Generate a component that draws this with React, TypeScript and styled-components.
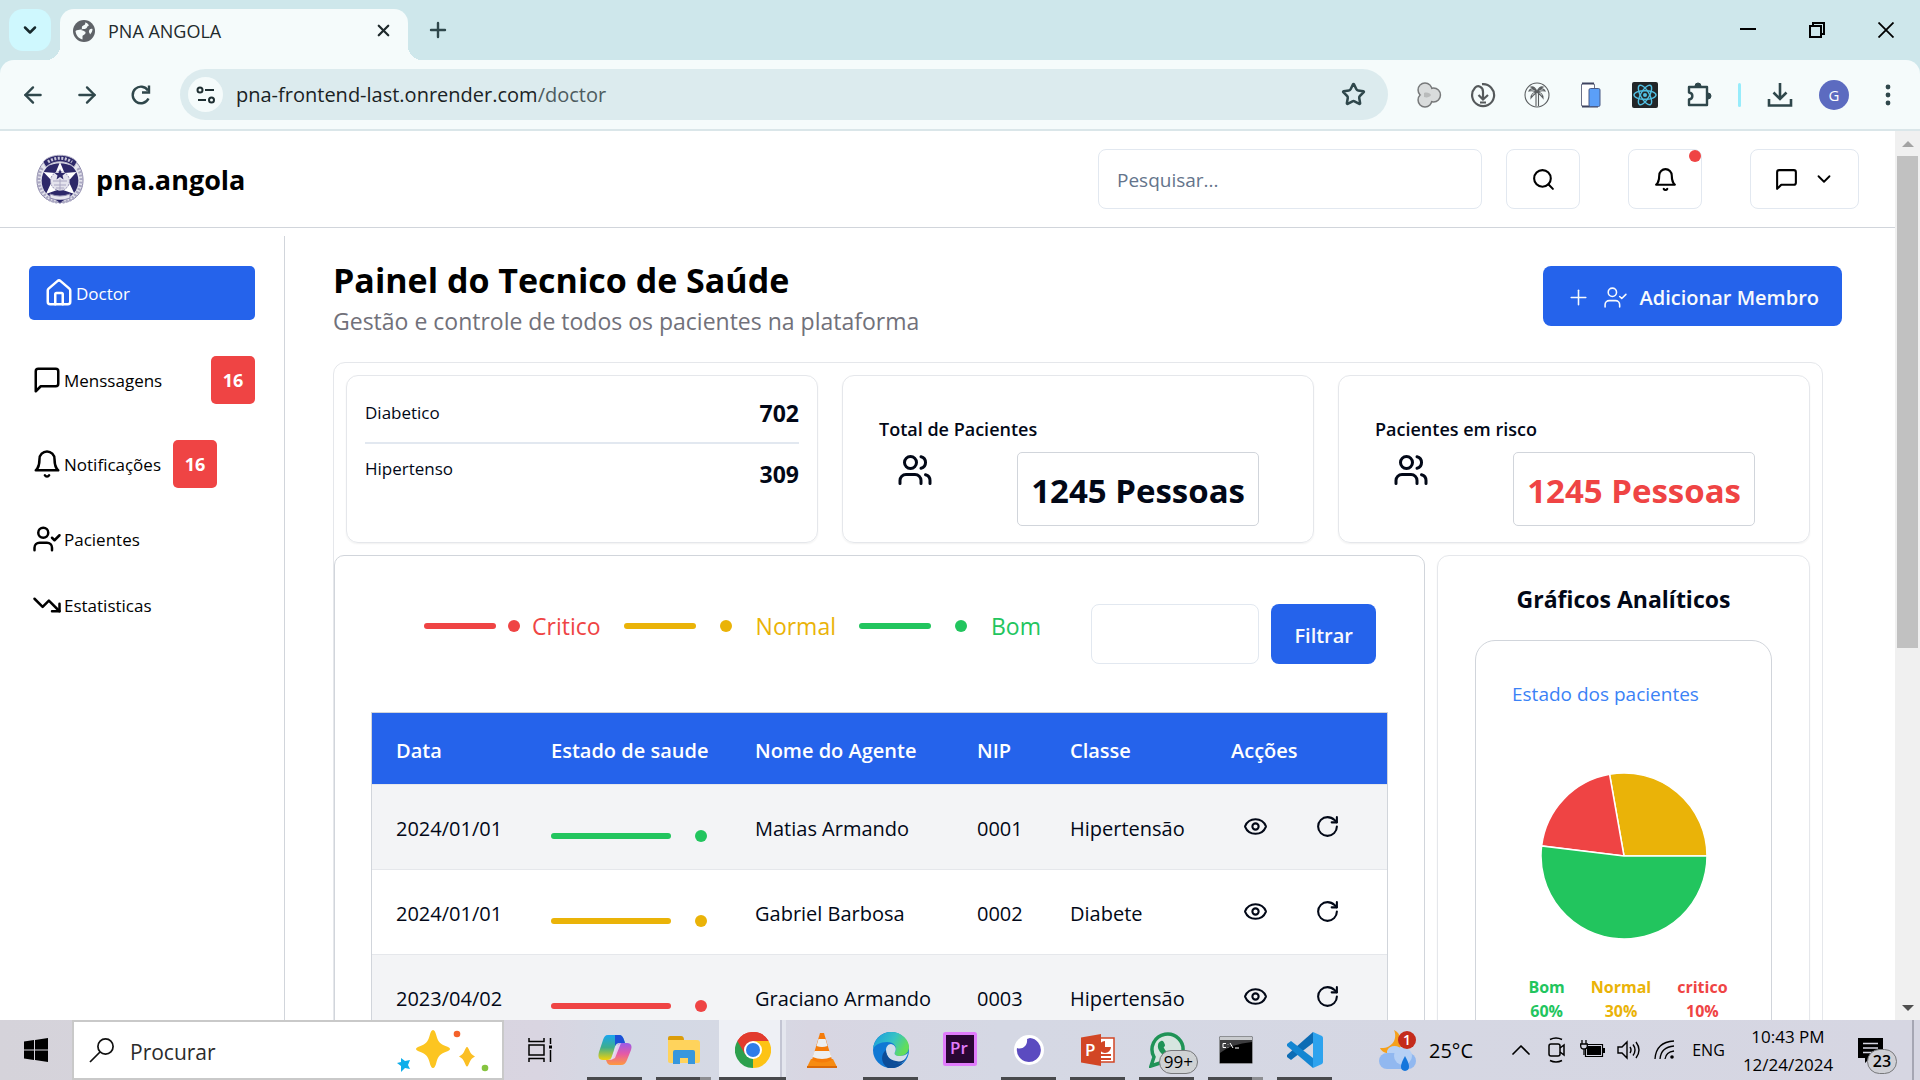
import React from "react";
import styled, { createGlobalStyle, css } from "styled-components";
import {
  ArrowLeft,
  ArrowRight,
  ChevronDown,
  ChevronUp,
  Eye,
  House,
  Plus,
  RotateCw,
  Search,
  Star,
  TrendingDown,
  X,
} from "lucide-react";

const sans = `"Open Sans", "Noto Sans", sans-serif`;

const color = {
  blue: "#2563eb",
  red: "#ef4444",
  yellow: "#eab308",
  green: "#22c55e",
  line: "#d1d5db",
  soft: "#e5e7eb",
  field: "#e2e8f0",
  ink: "#020817",
  chromeInk: "#2f474b",
};

const GlobalStyle = createGlobalStyle`
  *, *::before, *::after { box-sizing: border-box; }
  body { margin: 0; background: #fff; color: #000; font-family: ${sans}; }
  button, input { font: inherit; color: inherit; }
  button { padding: 0; border: 0; background: none; cursor: pointer; }
  a { color: inherit; text-decoration: none; }
  h1, h2, h3, p, ul, dl, dd { margin: 0; padding: 0; }
  ul { list-style: none; }
  svg { display: block; flex: none; }
`;

const Desktop = styled.div`
  display: flex;
  flex-direction: column;
  height: 100vh;
  overflow: hidden;
`;

/* ---------- Browser ---------- */

const TabStrip = styled.div`
  display: flex;
  align-items: stretch;
  height: 60px;
  padding: 9px 0 0 9px;
  background: #cee7eb;
`;

const TabMenuButton = styled.button`
  display: grid;
  place-items: center;
  width: 42px;
  height: 42px;
  border-radius: 14px;
  background: #cff8fe;
  color: #17282b;
`;

const Tab = styled.div`
  position: relative;
  display: flex;
  align-items: center;
  gap: 13px;
  width: 348px;
  margin-left: 9px;
  padding: 0 15px 8px 13px;
  border-radius: 14px 14px 0 0;
  background: #f5fbfb;
  font-size: 18px;
  color: #1f2a2c;

  &::before,
  &::after {
    content: "";
    position: absolute;
    bottom: 0;
    width: 14px;
    height: 14px;
  }
  &::before {
    right: 100%;
    background: radial-gradient(circle at 0 0, transparent 14px, #f5fbfb 14px);
  }
  &::after {
    left: 100%;
    background: radial-gradient(circle at 100% 0, transparent 14px, #f5fbfb 14px);
  }
`;

const TabTitle = styled.span`
  flex: 1;
`;

const StripButton = styled.button`
  display: grid;
  place-items: center;
  width: 60px;
  height: 42px;
  color: ${color.chromeInk};
`;

const WindowButtons = styled.div`
  display: flex;
  margin-left: auto;
`;

const WindowButton = styled.button`
  display: grid;
  place-items: center;
  width: 69px;
  height: 42px;
  color: #000;
`;

const ToolbarBack = styled.div`
  background: #cee7eb;
`;

const Toolbar = styled.div`
  display: flex;
  align-items: center;
  height: 71px;
  padding: 0 5px 0 6px;
  border-bottom: 2px solid #dae6e9;
  border-radius: 14px 14px 0 0;
  background: #f5fbfb;
  color: ${color.chromeInk};
`;

const NavButton = styled.button`
  display: grid;
  place-items: center;
  width: 54px;
  height: 44px;
`;

const Omnibox = styled.div`
  display: flex;
  align-items: center;
  flex: 1;
  gap: 13px;
  height: 51px;
  margin: 0 14px 0 12px;
  padding: 0 22px 0 8px;
  border-radius: 26px;
  background: #dcebee;
`;

const SiteInfo = styled.button`
  display: grid;
  place-items: center;
  width: 35px;
  height: 35px;
  border-radius: 50%;
  background: #f5fbfb;
`;

const Address = styled.a`
  flex: 1;
  font-size: 20px;
  color: #1a2224;

  span {
    color: #4d5c60;
  }
`;

const ExtensionButton = styled.button`
  display: grid;
  place-items: center;
  width: 54px;
  height: 44px;
`;

const ToolbarDivider = styled.span`
  width: 3px;
  height: 24px;
  margin: 0 12px;
  border-radius: 2px;
  background: #97ecfb;
`;

const Avatar = styled.span`
  display: grid;
  place-items: center;
  width: 30px;
  height: 30px;
  border-radius: 50%;
  background: #5c6bc0;
  color: #fff;
  font-size: 15px;
`;

/* ---------- Page ---------- */

const Viewport = styled.div`
  display: flex;
  flex: 1;
  min-height: 0;
`;

const Page = styled.div`
  flex: 1;
  min-width: 0;
  overflow: hidden;
`;

const Scrollbar = styled.div`
  display: flex;
  flex-direction: column;
  align-items: center;
  justify-content: space-between;
  width: 25px;
  padding: 10px 0 9px;
  background: #f0f0f0;
`;

const ScrollThumb = styled.span`
  width: 21px;
  height: 492px;
  margin: 9px 0 auto;
  background: #c1c1c1;
`;

const ScrollArrow = styled.span<{ $down?: boolean }>`
  border: 6px solid transparent;
  ${(p) =>
    p.$down
      ? css`
          border-top-color: #505050;
          border-bottom: 0;
        `
      : css`
          border-bottom-color: #a3a3a3;
          border-top: 0;
        `}
`;

const SiteHeader = styled.header`
  display: flex;
  align-items: center;
  height: 97px;
  padding: 0 36px;
  border-bottom: 1px solid ${color.line};
`;

const Brand = styled.a`
  display: flex;
  align-items: center;
  gap: 12px;
  font-size: 27px;
  font-weight: 700;
`;

const HeaderTools = styled.div`
  display: flex;
  align-items: center;
  gap: 48px;
  margin-left: auto;
`;

const SearchForm = styled.form`
  display: flex;
  gap: 24px;
`;

const fieldBox = css`
  height: 60px;
  border: 1px solid ${color.field};
  border-radius: 8px;
  background: #fff;
`;

const Field = styled.input<{ $width: number }>`
  ${fieldBox}
  width: ${(p) => p.$width}px;
  padding: 1px 18px 0;
  font-size: 19px;
  outline: 0;

  &::placeholder {
    color: #64748b;
    opacity: 1;
  }
`;

const OutlineButton = styled.button`
  ${fieldBox}
  position: relative;
  display: flex;
  align-items: center;
  justify-content: center;
  gap: 14px;
  min-width: 74px;
  padding: 0 23px;
`;

const AlertDot = styled.span`
  position: absolute;
  top: 0;
  right: 0;
  width: 12px;
  height: 12px;
  border-radius: 50%;
  background: ${color.red};
`;

const Body = styled.div`
  display: flex;
  padding-top: 8px;
`;

const Sidebar = styled.nav`
  width: 285px;
  height: 1200px;
  padding: 30px 29px;
  border-right: 1px solid ${color.line};
`;

const MenuLink = styled.a<{ $active?: boolean; $spread?: boolean; $tall?: boolean }>`
  display: flex;
  align-items: center;
  gap: 2px;
  height: ${(p) => (p.$active ? 54 : p.$tall ? 48 : 30)}px;
  margin-bottom: 36px;
  padding-left: 3px;
  font-size: 17px;

  ${(p) =>
    p.$active &&
    css`
      padding-left: 15px;
      border-radius: 5px;
      background: ${color.blue};
      color: #fff;
    `}
  ${(p) => p.$spread && "justify-content: space-between;"}
`;

const MenuLabel = styled.span`
  display: flex;
  align-items: center;
  gap: 2px;
`;

const Badge = styled.span<{ $gap?: number }>`
  display: grid;
  place-items: center;
  width: 44px;
  height: 48px;
  margin-left: ${(p) => p.$gap ?? 0}px;
  border-radius: 5px;
  background: ${color.red};
  color: #fff;
  font-size: 18px;
  font-weight: 700;
`;

const Main = styled.main`
  flex: 1;
  min-width: 0;
  padding: 30px 53px 0 48px;
`;

const TitleRow = styled.div`
  display: flex;
  justify-content: space-between;
  align-items: flex-start;
  height: 96px;
`;

const Title = styled.h1`
  margin-top: -7px;
  font-size: 34px;
  line-height: 42px;
`;

const Subtitle = styled.p`
  font-size: 23px;
  line-height: 40px;
  color: #71717a;
`;

const PrimaryButton = styled.button`
  display: flex;
  align-items: center;
  gap: 12px;
  height: 60px;
  padding: 2px 23px 0;
  border-radius: 8px;
  background: ${color.blue};
  color: #f8fafc;
  font-size: 20px;
  font-weight: 600;
`;

const Board = styled.section`
  margin-right: 19px;
  border: 1px solid ${color.soft};
  border-radius: 12px;
  color: ${color.ink};
`;

const Stats = styled.div`
  display: grid;
  grid-template-columns: repeat(3, 1fr);
  gap: 24px;
  padding: 12px 12px 0;
`;

const StatCard = styled.article<{ $wide?: boolean }>`
  height: 168px;
  padding: ${(p) => (p.$wide ? "18px" : "36px")};
  border: 1px solid ${color.soft};
  border-radius: 12px;
  box-shadow: 0 1px 2px rgba(0, 0, 0, 0.06);
`;

const Count = styled.div`
  display: flex;
  justify-content: space-between;
  height: 48px;

  & + & {
    padding-top: 11px;
    border-top: 2px solid ${color.field};
    height: 62px;
  }
  dt {
    font-size: 17px;
    line-height: 28px;
  }
  dd {
    font-size: 23px;
    line-height: 38px;
    font-weight: 700;
  }
  &:first-child dt {
    line-height: 38px;
  }
`;

const StatTitle = styled.h2`
  font-size: 18px;
  line-height: 34px;
  font-weight: 600;
`;

const StatFigure = styled.div`
  display: flex;
  justify-content: space-between;
  padding: 6px 18px;
`;

const FigureBox = styled.strong<{ $tone?: string }>`
  display: flex;
  align-items: center;
  height: 74px;
  padding: 2px 13px 0;
  border: 1px solid ${color.line};
  border-radius: 5px;
  color: ${(p) => p.$tone ?? "inherit"};
  font-size: 33px;
  white-space: nowrap;
`;

const Lower = styled.div`
  display: flex;
  gap: 12px;
  padding: 12px 12px 0 0;
`;

const RecordsPanel = styled.section`
  flex: 1;
  min-width: 0;
  padding: 48px 36px 36px;
  border: 1px solid ${color.line};
  border-radius: 10px;
`;

const Filters = styled.form`
  display: flex;
  justify-content: flex-end;
  gap: 12px;
  margin-bottom: 48px;
  padding-right: 12px;
`;

const Legend = styled.ul`
  display: flex;
  flex: 1;
  gap: 23px;
  padding-left: 53px;
`;

const LegendItem = styled.li<{ $tone: string; $gap: number }>`
  display: flex;
  align-items: center;
  gap: ${(p) => p.$gap}px;
  height: 44px;
  color: ${(p) => p.$tone};
  font-size: 23px;
`;

const Bar = styled.span<{ $width: number; $tone: string }>`
  width: ${(p) => p.$width}px;
  height: 6px;
  border-radius: 3px;
  background: ${(p) => p.$tone};
`;

const Dot = styled.span<{ $tone: string }>`
  width: 12px;
  height: 12px;
  border-radius: 50%;
  background: ${(p) => p.$tone};
`;

const Records = styled.table`
  width: 100%;
  border: 1px solid ${color.line};
  border-spacing: 0;
  table-layout: fixed;
  font-size: 20px;

  th,
  td {
    padding: 0 0 0 24px;
    text-align: left;
    white-space: nowrap;
  }
  th {
    height: 71px;
    padding-top: 4px;
    background: ${color.blue};
    color: #fff;
    font-weight: 600;
  }
  td {
    height: 85px;
    padding-top: 2px;
    border-top: 1px solid ${color.soft};
  }
  tbody tr:nth-child(odd) {
    background: #f3f4f6;
  }
`;

const HealthState = styled.div`
  display: flex;
  align-items: center;
  gap: 24px;
  padding-top: 16px;
`;

const Actions = styled.div`
  display: flex;
  gap: 47px;
  padding: 0 0 3px 12px;
`;

const ChartPanel = styled.section`
  width: 373px;
  padding: 24px 37px;
  border: 1px solid ${color.soft};
  border-radius: 12px;
  box-shadow: 0 1px 2px rgba(0, 0, 0, 0.06);
`;

const ChartTitle = styled.h2`
  margin-bottom: 22px;
  font-size: 23px;
  line-height: 38px;
  font-weight: 700;
  text-align: center;
`;

const ChartCard = styled.div`
  height: 480px;
  padding: 36px;
  border: 1px solid ${color.line};
  border-radius: 20px;
`;

const ChartName = styled.h3`
  margin-bottom: 61px;
  color: #3b82f6;
  font-size: 19px;
  line-height: 34px;
  font-weight: 500;
  white-space: nowrap;
`;

const PieHolder = styled.div`
  display: flex;
  justify-content: center;
`;

const Shares = styled.ul`
  display: flex;
  justify-content: center;
  gap: 26px;
  margin-top: 37px;
  padding-left: 9px;
`;

const Share = styled.li<{ $tone: string }>`
  display: grid;
  gap: 4px;
  color: ${(p) => p.$tone};
  font-size: 16px;
  line-height: 20px;
  font-weight: 700;
  text-align: center;
`;

/* ---------- Taskbar ---------- */

const Taskbar = styled.footer`
  display: flex;
  height: 60px;
  background: linear-gradient(90deg, #d5d3da 0, #d9d5e1 540px, #d3d9e5 620px, #d6d9e4 760px, #d8d6e2 810px, #d5d8e4 1000px, #d6d6e2 100%);
  color: #000;
`;

const StartButton = styled.button`
  display: grid;
  place-items: center;
  width: 72px;
`;

const SystemSearch = styled.label`
  display: flex;
  align-items: center;
  gap: 15px;
  width: 432px;
  padding: 0 10px 0 15px;
  border: 2px solid #c9c9c9;
  background: #fff;

  input {
    flex: 1;
    min-width: 0;
    padding: 3px 0 0;
    border: 0;
    outline: 0;
    background: none;
    font-size: 21px;
  }
  input::placeholder {
    color: #2b2b2b;
    opacity: 1;
  }
`;

const TaskViewButton = styled.button`
  display: grid;
  place-items: center;
  width: 72px;
`;

const Apps = styled.div`
  display: flex;
  padding-left: 4px;
`;

const AppButton = styled.button<{ $open?: boolean; $active?: boolean; $stack?: boolean }>`
  position: relative;
  display: grid;
  place-items: center;
  width: 69px;
  ${(p) =>
    p.$active &&
    css`
      background: linear-gradient(90deg, transparent 0 1px, #eef0f5 1px 62px, #c3c5d3 62px 64px, #e4e6ee 64px 68px, transparent 68px);
    `}

  &::after {
    content: "";
    position: absolute;
    left: ${(p) => (p.$active ? 1 : 7)}px;
    right: ${(p) => (p.$active ? 1 : 7)}px;
    bottom: 0;
    height: 3px;
    background: ${(p) =>
      p.$stack ? "linear-gradient(90deg, #48494c 44px, #8d8e92 44px)" : p.$open ? "#48494c" : "transparent"};
  }
`;

const UnreadPill = styled.span`
  position: absolute;
  right: 3px;
  bottom: 6px;
  padding: 0 4px;
  border: 1px solid #77787b;
  border-radius: 13px;
  background: #cfd2d4;
  font-size: 17px;
  line-height: 22px;
`;

const Tray = styled.div`
  display: flex;
  align-items: center;
  margin-left: auto;
  padding-right: 6px;
`;

const Weather = styled.button`
  display: flex;
  align-items: center;
  gap: 12px;
  margin-right: 30px;
  font-size: 20px;
`;

const TrayIcon = styled.button`
  display: grid;
  place-items: center;
  width: 36px;
  height: 60px;
`;

const Language = styled.button`
  width: 51px;
  font-size: 16px;
`;

const Clock = styled.button`
  width: 108px;
  padding-top: 1px;
  font-size: 17px;
  line-height: 28px;
`;

const NoticeButton = styled.button`
  position: relative;
  display: grid;
  place-items: center;
  width: 72px;
  height: 60px;
  padding-right: 14px;
  border-right: 2px solid #a5a6b3;
`;

const NoticeCount = styled.span`
  position: absolute;
  top: 29px;
  left: 25px;
  width: 30px;
  border: 1px solid #77787b;
  border-radius: 13px;
  background: #cfd0d6;
  font-size: 16px;
  line-height: 23px;
  font-weight: 600;
`;

/* ---------- Drawings ---------- */

type LineIconProps = { size?: number; stroke?: number; children: React.ReactNode };

const LineIcon = ({ size = 24, stroke = 2, children }: LineIconProps) => (
  <svg
    width={size}
    height={size}
    viewBox="0 0 24 24"
    fill="none"
    stroke="currentColor"
    strokeWidth={stroke}
    strokeLinecap="round"
    strokeLinejoin="round"
    aria-hidden="true"
  >
    {children}
  </svg>
);

const MessageIcon = ({ size }: { size: number }) => (
  <LineIcon size={size}>
    <path d="M21 15a2 2 0 0 1-2 2H7l-4 4V5a2 2 0 0 1 2-2h14a2 2 0 0 1 2 2z" />
  </LineIcon>
);

const BellIcon = ({ size }: { size: number }) => (
  <LineIcon size={size}>
    <path d="M6 8a6 6 0 0 1 12 0c0 7 3 9 3 9H3s3-2 3-9" />
    <path d="M10.3 21a1.94 1.94 0 0 0 3.4 0" />
  </LineIcon>
);

const UserCheckIcon = ({ size, stroke }: { size: number; stroke?: number }) => (
  <LineIcon size={size} stroke={stroke}>
    <path d="M16 21v-2a4 4 0 0 0-4-4H6a4 4 0 0 0-4 4v2" />
    <circle cx="9" cy="7" r="4" />
    <path d="m16 11 2 2 4-4" />
  </LineIcon>
);

const UsersIcon = ({ size }: { size: number }) => (
  <LineIcon size={size}>
    <path d="M16 21v-2a4 4 0 0 0-4-4H6a4 4 0 0 0-4 4v2" />
    <circle cx="9" cy="7" r="4" />
    <path d="M22 21v-2a4 4 0 0 0-3-3.87" />
    <path d="M16 3.13a4 4 0 0 1 0 7.75" />
  </LineIcon>
);

const GlobeIcon = () => (
  <svg width="22" height="22" viewBox="0 0 22 22" aria-hidden="true">
    <circle cx="11" cy="11" r="11" fill="#5f6368" />
    <path d="M12 2.500c1 2-1 2.500-2.500 3.500s.5 3-1.500 3.500-4 0-5.500 1.500c.5 4 3 7.500 7 8.500v-3c0-1.500 2.500-1.500 3-3.500s-2.500-2-4.500-3c1-1.500 3.500-.5 5-1.500s1-2.500 3-3c-1-2-2.500-3-4-3z" fill="#f5fbfb" />
    <path d="M19.500 9c-2-.5-3 .5-3.500 2s1 2 1 3.500c1.500-1.500 2.500-3.500 2.500-5.500z" fill="#f5fbfb" />
  </svg>
);

const PoliceBadge = () => (
  <svg width="48" height="50" viewBox="0 0 48 50" aria-hidden="true">
    <path d="M8 8C14 0 34 0 40 8c9 9 9 25 2 33-8 10-28 10-36 0C-1 33-1 17 8 8z" fill="#e5e5ed" stroke="#8985a8" strokeWidth="1" />
    <path d="M6 14c-5 8-4 18 1 25 4 6 9 9 17 9s13-3 17-9c5-7 6-17 1-25" fill="none" stroke="#aaa7c2" strokeWidth="3.500" strokeDasharray="2 1.500" />
    <path d="M11 13c7-5 19-5 26 0 7 8 7 19 1 26-7 8-21 8-28 0-6-7-6-18 1-26z" fill="#2d2869" />
    <path d="M24 8l4.500 11 12-1-8 9 6 13-14.500-5L10 40l6-13-8.500-9 12 1z" fill="#fff" />
    <circle cx="24" cy="27" r="9.500" fill="#e4e3ed" stroke="#8f8baf" strokeWidth="1" strokeDasharray="2 1" />
    <path d="M24 15l1.500 4h4l-3 2.500 1 4-3.500-2.500-3.500 2.500 1-4-3-2.500h4z" fill="#2d2869" />
    <path d="M17 27h14M18 31h12M20 34h8M24 25v12" stroke="#aaa7c2" strokeWidth="1" />
    <path d="M7 8C14-1 34-1 41 8l-3 5C30 6 18 6 10 13z" fill="#2d2869" stroke="#b9b7cc" strokeWidth="1" />
    <path d="M12 8c7-5 17-5 24 0" fill="none" stroke="#c9c7da" strokeWidth="3" strokeDasharray="2 1.500" />
    <path d="M14 40q10 4 20 0v4q-10 4-20 0z" fill="#e9e8f1" stroke="#8f8baf" strokeWidth="1" />
    <path d="M20 46h8l-4 3z" fill="#2d2869" />
  </svg>
);

const TuneIcon = () => (
  <svg width="20" height="18" viewBox="0 0 20 18" fill="none" stroke="#1f2f32" strokeWidth="2" aria-hidden="true">
    <circle cx="4" cy="4" r="2.500" />
    <path d="M9 4h9M2 14h8" />
    <circle cx="15.500" cy="14" r="2.500" />
  </svg>
);

const ReloadIcon = () => (
  <svg width="22" height="22" viewBox="0 0 22 22" fill="none" stroke="currentColor" strokeWidth="2.400" aria-hidden="true">
    <path d="M18.500 14.500A8.300 8.300 0 1 1 18 6.500" />
    <path d="M19 1.500v7h-7" />
  </svg>
);

const CloverIcon = () => (
  <svg width="26" height="26" viewBox="0 0 26 26" aria-hidden="true">
    <g fill="#d9dcdc" stroke="#77797a" strokeWidth="2.400">
      <circle cx="9" cy="8" r="6.500" />
      <circle cx="17.500" cy="13" r="6.500" />
      <circle cx="9" cy="18" r="6.500" />
    </g>
    <g fill="#d9dcdc">
      <circle cx="9" cy="8" r="6.200" />
      <circle cx="17.500" cy="13" r="6.200" />
      <circle cx="9" cy="18" r="6.200" />
    </g>
    <path d="M8 11c3-1 6 0 7 2-1 2-4 3-7 2z" fill="#b9bbbb" />
  </svg>
);

const GrabberIcon = () => (
  <svg width="26" height="26" viewBox="0 0 26 26" fill="none" stroke="#55595b" strokeWidth="2.200" aria-hidden="true">
    <path d="M12 2.200a11 11 0 1 1-7 3.500c3-3 8-1 8 4v7M8.500 13l4.500 4.500 5-4.500M10 20.500h6" />
  </svg>
);

const PalmIcon = () => (
  <svg width="26" height="26" viewBox="0 0 26 26" fill="none" stroke="#5a5e60" strokeWidth="1.100" aria-hidden="true">
    <circle cx="13" cy="13" r="12" />
    <path d="M12 11v13M14.500 11v13M13 10C10 6 6 6 5 9c3-1 5 0 8 1zM13 10c3-4 7-4 8-1-3-1-5 0-8 1zM13 10c-1-4-4-6-6-5 3 1 4 3 6 5zM13 10c1-4 4-6 6-5-3 1-4 3-6 5zM13 10c-4 0-6 3-6 6 2-3 4-4 6-6zM13 10c4 0 6 3 6 6-2-3-4-4-6-6z" />
  </svg>
);

const DevicesIcon = () => (
  <svg width="22" height="26" viewBox="0 0 22 26" aria-hidden="true">
    <rect x="1.500" y="1.500" width="13" height="23" rx="1.500" fill="#fff" stroke="#6a6f86" />
    <path d="M2 1.500h12M2 24.500h16" stroke="#3e4460" strokeWidth="2" />
    <rect x="9" y="6.500" width="11" height="18" rx="1.500" fill="#5b9ff8" stroke="#4a5b86" />
  </svg>
);

const ReactToolsIcon = () => (
  <svg width="26" height="26" viewBox="0 0 26 26" fill="none" stroke="#51bfe2" strokeWidth="1.400" aria-hidden="true">
    <rect width="26" height="26" rx="2" fill="#222628" stroke="none" />
    <ellipse cx="13" cy="13" rx="11" ry="4.300" />
    <ellipse cx="13" cy="13" rx="11" ry="4.300" transform="rotate(60 13 13)" />
    <ellipse cx="13" cy="13" rx="11" ry="4.300" transform="rotate(120 13 13)" />
    <circle cx="13" cy="13" r="2" fill="#51bfe2" stroke="none" />
  </svg>
);

const PuzzleIcon = () => (
  <svg width="26" height="26" viewBox="0 0 26 26" aria-hidden="true">
    <path d="M3 5h18v18H3v-5.500c4.500-.5 4.500-6.500 0-7z" fill="none" stroke="currentColor" strokeWidth="2.400" strokeLinejoin="round" />
    <path d="M9 4a3 3 0 0 1 6 0zM22 11a3 3 0 0 1 0 6z" fill="currentColor" stroke="currentColor" />
  </svg>
);

const DownloadIcon = () => (
  <svg width="26" height="26" viewBox="0 0 26 26" fill="none" stroke="currentColor" strokeWidth="2.600" aria-hidden="true">
    <path d="M13 1v15M6.500 10.500L13 17l6.500-6.500M2 17v6.500h22V17" />
  </svg>
);

const MoreIcon = () => (
  <svg width="6" height="22" viewBox="0 0 6 22" fill="currentColor" aria-hidden="true">
    <circle cx="3" cy="3" r="2.400" />
    <circle cx="3" cy="11" r="2.400" />
    <circle cx="3" cy="19" r="2.400" />
  </svg>
);

const MinimizeIcon = () => (
  <svg width="16" height="16" viewBox="0 0 16 16" aria-hidden="true">
    <path d="M0 7h16" stroke="#000" strokeWidth="2" />
  </svg>
);

const RestoreIcon = () => (
  <svg width="16" height="16" viewBox="0 0 16 16" fill="none" stroke="#000" strokeWidth="2" aria-hidden="true">
    <path d="M1 4h11v11H1zM4 4V1h11v11h-3" />
  </svg>
);

const CloseIcon = () => (
  <svg width="16" height="16" viewBox="0 0 16 16" stroke="#000" strokeWidth="1.800" aria-hidden="true">
    <path d="M.5.5l15 15M15.500.5l-15 15" />
  </svg>
);

const slices = [
  { tone: color.yellow, from: 0, to: 100 },
  { tone: color.red, from: 100, to: 173 },
  { tone: color.green, from: 173, to: 360 },
];

const PieChart = () => {
  const point = (deg: number) => {
    const a = (deg * Math.PI) / 180;
    return `${84 + 83 * Math.cos(a)} ${84 - 83 * Math.sin(a)}`;
  };
  return (
    <svg width="168" height="168" viewBox="0 0 168 168" role="img" aria-label="Estado dos pacientes">
      {slices.map((s) => (
        <path
          key={s.tone}
          d={`M84 84L${point(s.from)}A83 83 0 ${s.to - s.from > 180 ? 1 : 0} 0 ${point(s.to)}Z`}
          fill={s.tone}
          stroke="#fff"
          strokeWidth="1.500"
        />
      ))}
    </svg>
  );
};

const WindowsLogo = () => (
  <svg width="24" height="24" viewBox="0 0 24 24" aria-hidden="true">
    <path d="M0 3.500l10-1.400v9.400H0zM11 2l13-2v11.500H11zM0 12.500h10v9.400L0 20.500zM11 12.500h13V24l-13-2z" />
  </svg>
);

const LoupeIcon = () => (
  <svg width="26" height="26" viewBox="0 0 26 26" fill="none" stroke="#111" strokeWidth="1.700" aria-hidden="true">
    <circle cx="16.500" cy="9.500" r="7.600" />
    <path d="M11 15L1 25" />
  </svg>
);

const SparklesArt = () => (
  <svg width="96" height="44" viewBox="0 0 96 44" aria-hidden="true">
    <path d="M37 2c1.500 0 2.500 2 3.500 6 1.500 6 4 8 9 10 6 2 6 4 0 6-5 2-7.500 4-9 10-1 4-2 6-3.500 6s-2.500-2-3.500-6c-1.500-6-4-8-9-10-6-2-6-4 0-6 5-2 7.500-4 9-10 1-4 2-6 3.500-6z" fill="#fcc521" />
    <path d="M71 19c2 0 2 7 8 9.500-6 2.500-6 10-8 10s-2-7.500-8-10c6-2.500 6-9.500 8-9.500z" fill="#fbbf24" />
    <path d="M5 30l4 3 5-1-2 5 2 4-5-1-4 4v-6l-4-3 4-1z" fill="#0eaeea" />
    <circle cx="61" cy="6" r="3.300" fill="#f4622a" />
    <circle cx="89" cy="40" r="3.300" fill="#86c440" />
  </svg>
);

const TaskViewIcon = () => (
  <svg width="25" height="24" viewBox="0 0 25 24" fill="none" stroke="#000" strokeWidth="1.500" aria-hidden="true">
    <path d="M1 0v3.500h15V0M1 7h15v10H1zM1 24v-3.500h15V24M22.500 0v6M22.500 12v12" />
    <path d="M21 7.500h3v3h-3z" fill="#000" stroke="none" />
  </svg>
);

const CopilotIcon = () => (
  <svg width="34" height="32" viewBox="0 0 34 32" aria-hidden="true">
    <defs>
      <linearGradient id="cop-a" x1="0" y1="0" x2="0" y2="1">
        <stop offset="0" stopColor="#18a5f0" />
        <stop offset=".5" stopColor="#3fae8c" />
        <stop offset="1" stopColor="#f2d20a" />
      </linearGradient>
      <linearGradient id="cop-b" x1="0" y1="0" x2="0" y2="1">
        <stop offset="0" stopColor="#9a5be8" />
        <stop offset=".5" stopColor="#e65aa5" />
        <stop offset="1" stopColor="#ff9a3d" />
      </linearGradient>
    </defs>
    <path d="M10 1h11c3 0 4 2 5 5l1 3h-6c-3 0-4 3-5 7l-2 6c-1 3-2 4-5 4H5c-5 0-5-4-4-8L5 6c1-3 2-5 5-5z" fill="url(#cop-a)" />
    <path d="M17 1h4c3 0 4 2 5 5l1 3h-6c-2 0-3 1-4 3z" fill="#1d4fd7" />
    <path d="M24 9h5c5 0 5 4 4 7l-4 10c-1 3-3 5-6 5H13c-3 0-4-2-5-5h3c3 0 4-2 5-5l3-8c1-3 2-4 5-4z" fill="url(#cop-b)" />
    <path d="M18 12l5-3-6 15-4 2z" fill="#e9dff5" opacity=".85" />
  </svg>
);

const FolderIcon = () => (
  <svg width="34" height="36" viewBox="0 0 34 36" aria-hidden="true">
    <path d="M1 6q0-2 2-2h11q3 0 3 4H1z" fill="#dc9d09" />
    <path d="M1 8h29q3 0 3 3v18q0 2-2 2H3q-2 0-2-2z" fill="#ffd35c" />
    <path d="M6 31V20q0-2 2-2h18q2 0 2 2v12h-7v-6h-8v6H6z" fill="#3797dd" />
  </svg>
);

const ChromeIcon = () => (
  <svg width="36" height="36" viewBox="0 0 36 36" aria-hidden="true">
    <path d="M18 18L2.400 9A18 18 0 0 1 33.600 9z" fill="#e23b2e" />
    <path d="M18 18l15.600-9A18 18 0 0 1 18 36z" fill="#fdc315" />
    <path d="M18 18v18A18 18 0 0 1 2.400 9z" fill="#2da04d" />
    <path d="M18 9h15.600L25.800 22.500 18 36l7.800-13.500z" fill="#fdc315" />
    <path d="M2.400 9l7.800 13.500L18 9h15.600A18 18 0 0 0 2.400 9z" fill="#e23b2e" />
    <circle cx="18" cy="18" r="9" fill="#fff" />
    <circle cx="18" cy="18" r="7" fill="#2f7de8" />
  </svg>
);

const VlcIcon = () => (
  <svg width="30" height="36" viewBox="0 0 30 36" aria-hidden="true">
    <path d="M4 27h22l4 8H0z" fill="#f78b11" />
    <path d="M13 1h4l8 27q-10 5-20 0z" fill="#f57c0a" />
    <path d="M11.500 7h7l2 7q-5.500 2-11 0zM7.500 19h15l2 6q-9.500 4-19 0z" fill="#eceff1" />
    <path d="M0 34h30v2H0z" fill="#db6a08" />
  </svg>
);

const EdgeIcon = () => (
  <svg width="36" height="36" viewBox="0 0 36 36" aria-hidden="true">
    <defs>
      <linearGradient id="edge-top" x1="0" y1="0" x2="1" y2=".4">
        <stop offset="0" stopColor="#1a9be0" />
        <stop offset=".6" stopColor="#36c3c4" />
        <stop offset="1" stopColor="#62dd5a" />
      </linearGradient>
    </defs>
    <circle cx="18" cy="18" r="18" fill="#1078d4" />
    <path d="M0 17C1 7 9 0 18 0c11 0 18 8 18 15 0 6-5 9-9 9-5 0-6-2-5-4 3-5-1-10-8-10C7 10 2 13 0 17z" fill="url(#edge-top)" />
    <path d="M13 18c0-3 2-6 5-6 4 1 6 4 4 8-1 2 0 4 5 4 3 0 6-1 8-3-1 3-3 7-6 10-9 2-16-5-16-13z" fill="#d3ddea" />
    <path d="M13 18c-1 7 4 14 12 14 3 0 5-1 6-2-4 5-10 7-16 6-7-4-8-13-2-18z" fill="#0c4c97" />
    <path d="M13 18c0 6 4 10 10 11 4 1 8 0 10-3-2 4-5 6-9 6-7 0-12-6-11-14z" fill="#0c4c97" />
  </svg>
);

const LabelText = styled.text`
  font-family: ${sans};
  font-weight: 600;
`;

const PremiereIcon = () => (
  <svg width="34" height="36" viewBox="0 0 34 36" aria-hidden="true">
    <rect x="1.500" y="1.500" width="31" height="31" rx="1" fill="#2a0634" stroke="#e07bfb" strokeWidth="3" />
    <LabelText x="7" y="22" fontSize="17" fill="#e07bfb">Pr</LabelText>
  </svg>
);

const EclipseIcon = () => (
  <svg width="30" height="30" viewBox="0 0 30 30" aria-hidden="true">
    <circle cx="15" cy="15" r="15" fill="#fff" />
    <path d="M16 3a12 12 0 1 1-13 10c5 2 11-2 10-9z" fill="#5b4bc0" />
  </svg>
);

const PowerPointIcon = () => (
  <svg width="34" height="32" viewBox="0 0 34 32" aria-hidden="true">
    <path d="M17 4h16v24H17z" fill="#fff" stroke="#d24625" strokeWidth="1.500" />
    <path d="M24 7v6h6a6 6 0 1 1-6-6zM20 20h10v2H20zM20 24h10v2H20z" fill="#d24625" />
    <path d="M0 3.500L20 0v32L0 28.500z" fill="#d24625" />
    <LabelText x="4" y="22" fontSize="17" fill="#fff">P</LabelText>
  </svg>
);

const WhatsAppIcon = () => (
  <svg width="36" height="36" viewBox="0 0 36 36" aria-hidden="true">
    <path d="M2 34l3-9A15.500 15.500 0 1 1 11 31z" fill="#d6e5df" stroke="#1f9356" strokeWidth="3.500" />
    <path d="M12 9c2-1 3 1 4 4 0 2-2 2-1 3 1 3 4 5 6 6 2-1 2-3 4-2 3 1 3 2 3 3-2 5-7 4-11 2-5-3-9-8-8-12 0-2 1-3 3-4z" fill="#1f9356" />
  </svg>
);

const TerminalIcon = () => (
  <svg width="34" height="28" viewBox="0 0 34 28" aria-hidden="true">
    <rect x=".5" y=".5" width="33" height="27" rx="1" fill="#000" stroke="#8e9094" />
    <path d="M1 1h32v3H1z" fill="#c9cbce" />
    <path d="M1 4h32v2Q12 8 1 17z" fill="#3d3d3f" />
    <path d="M7 7.500H4v4h3M9 8v.5M9 11v.5M11 7l3 5M16 12h4" fill="none" stroke="#fff" strokeWidth="1" />
  </svg>
);

const VsCodeIcon = () => (
  <svg width="36" height="36" viewBox="0 0 36 36" aria-hidden="true">
    <path d="M26 0v11L4 28l-4-3v-2z" fill="#0d6cb4" />
    <path d="M0 12l4-3 22 17v10L0 14z" fill="#1486d2" />
    <path d="M26 0l9 4q1 1 1 2v24q0 1-1 2l-9 4z" fill="#2ea3ee" />
  </svg>
);

const WeatherIcon = () => (
  <svg width="38" height="42" viewBox="0 0 38 42" aria-hidden="true">
    <path d="M15 1c4 9-2 19-14 18 3 7 15 7 20 0 4-7 0-15-6-18z" fill="#f5a11c" />
    <path d="M8 22c2-6 12-7 16 0l4 6H8z" fill="#b5d0f5" />
    <rect x="0" y="24" width="37" height="16" rx="8" fill="#91b8f0" />
    <circle cx="24" cy="27" r="9" fill="#b5d0f5" />
    <path d="M26 27q-8 14 0 15 8-1 0-15z" fill="#1476dc" />
    <circle cx="28" cy="11" r="9" fill="#c42b1c" />
    <LabelText x="24" y="16" fontSize="14" fill="#fff">1</LabelText>
  </svg>
);

const MeetIcon = () => (
  <svg width="20" height="26" viewBox="0 0 20 26" fill="none" stroke="#000" strokeWidth="1.500" aria-hidden="true">
    <rect x="2" y="7" width="11" height="12" rx="2" />
    <path d="M13 11l4-3v10l-4-3M3 2.500q6-3 12 0M3 23.500q6 3 12 0" />
  </svg>
);

const BatteryIcon = () => (
  <svg width="26" height="20" viewBox="0 0 26 20" aria-hidden="true">
    <path d="M5.500 4.500h17v12h-17z" fill="none" stroke="#000" strokeWidth="1.200" />
    <path d="M7 6h14v9H7z" />
    <path d="M23 8h2v5h-2z" />
    <path d="M2 0v4M6 0v4M.7 4h6.600v2q0 3-3.300 3T.7 6zM4 9v6" fill="#d6d6e2" stroke="#000" strokeWidth="1.300" />
  </svg>
);

const SpeakerIcon = () => (
  <svg width="24" height="20" viewBox="0 0 24 20" fill="none" stroke="#000" strokeWidth="1.400" aria-hidden="true">
    <path d="M1 7h4l5-5v16l-5-5H1zM13 7q2 3 0 6M16 4.500q4 5.500 0 11M19 2q6 8 0 16" />
  </svg>
);

const WifiIcon = () => (
  <svg width="22" height="22" viewBox="0 0 22 22" fill="none" stroke="#000" strokeWidth="1.300" aria-hidden="true">
    <path d="M1 20Q2 3 20 2M6 20Q7 8 20 7M11 20q1-7 9-8" />
    <circle cx="18" cy="18" r="1.800" fill="#000" stroke="none" />
  </svg>
);

const NoticeIcon = () => (
  <svg width="25" height="26" viewBox="0 0 25 26" aria-hidden="true">
    <path d="M0 1h25v20H12l-5 5v-5H0z" />
    <path d="M5 6.500h15M5 11h15M5 15.500h10" stroke="#d6d6e2" strokeWidth="1.500" />
  </svg>
);

/* ---------- Data ---------- */

const extensions = [
  { name: "Trevo", icon: <CloverIcon /> },
  { name: "Captura", icon: <GrabberIcon /> },
  { name: "Palmeira", icon: <PalmIcon /> },
  { name: "Dispositivos", icon: <DevicesIcon /> },
  { name: "React Developer Tools", icon: <ReactToolsIcon /> },
  { name: "Extensões", icon: <PuzzleIcon /> },
];

const legend = [
  { label: "Critico", tone: color.red, gap: 12 },
  { label: "Normal", tone: color.yellow, gap: 24 },
  { label: "Bom", tone: color.green, gap: 24 },
];

const columns = [
  { label: "Data", width: 155 },
  { label: "Estado de saude", width: 204 },
  { label: "Nome do Agente", width: 222 },
  { label: "NIP", width: 93 },
  { label: "Classe", width: 161 },
  { label: "Acções" },
];

const records = [
  { date: "2024/01/01", tone: color.green, name: "Matias Armando", nip: "0001", kind: "Hipertensão" },
  { date: "2024/01/01", tone: color.yellow, name: "Gabriel Barbosa", nip: "0002", kind: "Diabete" },
  { date: "2023/04/02", tone: color.red, name: "Graciano Armando", nip: "0003", kind: "Hipertensão" },
];

const shares = [
  { label: "Bom", value: "60%", tone: color.green },
  { label: "Normal", value: "30%", tone: color.yellow },
  { label: "critico", value: "10%", tone: color.red },
];

const apps = [
  { name: "Copilot", icon: <CopilotIcon />, open: true },
  { name: "Explorador", icon: <FolderIcon />, stack: true },
  { name: "Chrome", icon: <ChromeIcon />, open: true, active: true },
  { name: "VLC", icon: <VlcIcon /> },
  { name: "Edge", icon: <EdgeIcon />, open: true },
  { name: "Premiere", icon: <PremiereIcon /> },
  { name: "Insomnia", icon: <EclipseIcon />, open: true },
  { name: "PowerPoint", icon: <PowerPointIcon />, open: true },
  { name: "WhatsApp", icon: <WhatsAppIcon />, open: true, unread: "99+" },
  { name: "Terminal", icon: <TerminalIcon />, stack: true },
  { name: "VS Code", icon: <VsCodeIcon />, open: true },
];

/* ---------- Sections ---------- */

const Browser = () => (
  <>
    <TabStrip>
      <TabMenuButton aria-label="Pesquisar separadores">
        <ChevronDown size={20} strokeWidth={3} />
      </TabMenuButton>
      <Tab>
        <GlobeIcon />
        <TabTitle>PNA ANGOLA</TabTitle>
        <button aria-label="Fechar separador">
          <X size={19} strokeWidth={2.8} />
        </button>
      </Tab>
      <StripButton aria-label="Novo separador">
        <Plus size={24} strokeWidth={2.4} />
      </StripButton>
      <WindowButtons>
        <WindowButton aria-label="Minimizar">
          <MinimizeIcon />
        </WindowButton>
        <WindowButton aria-label="Restaurar">
          <RestoreIcon />
        </WindowButton>
        <WindowButton aria-label="Fechar">
          <CloseIcon />
        </WindowButton>
      </WindowButtons>
    </TabStrip>
    <ToolbarBack>
      <Toolbar>
        <NavButton aria-label="Anterior">
          <ArrowLeft size={26} strokeWidth={2.2} />
        </NavButton>
        <NavButton aria-label="Seguinte">
          <ArrowRight size={26} strokeWidth={2.2} />
        </NavButton>
        <NavButton aria-label="Recarregar">
          <ReloadIcon />
        </NavButton>
        <Omnibox>
          <SiteInfo aria-label="Informações do site">
            <TuneIcon />
          </SiteInfo>
          <Address href="#doctor">
            pna-frontend-last.onrender.com<span>/doctor</span>
          </Address>
          <button aria-label="Adicionar aos marcadores">
            <Star size={25} strokeWidth={2.4} strokeLinejoin="miter" />
          </button>
        </Omnibox>
        {extensions.map((e) => (
          <ExtensionButton key={e.name} aria-label={e.name}>
            {e.icon}
          </ExtensionButton>
        ))}
        <ToolbarDivider />
        <ExtensionButton aria-label="Transferências">
          <DownloadIcon />
        </ExtensionButton>
        <ExtensionButton aria-label="Perfil">
          <Avatar>G</Avatar>
        </ExtensionButton>
        <ExtensionButton aria-label="Mais opções">
          <MoreIcon />
        </ExtensionButton>
      </Toolbar>
    </ToolbarBack>
  </>
);

const Header = () => (
  <SiteHeader>
    <Brand href="#inicio">
      <PoliceBadge />
      pna.angola
    </Brand>
    <HeaderTools>
      <SearchForm role="search">
        <Field $width={384} type="search" placeholder="Pesquisar..." aria-label="Pesquisar" />
        <OutlineButton type="button" aria-label="Pesquisar">
          <Search size={25} />
        </OutlineButton>
      </SearchForm>
      <OutlineButton aria-label="Notificações">
        <BellIcon size={25} />
        <AlertDot />
      </OutlineButton>
      <OutlineButton aria-label="Mensagens">
        <MessageIcon size={25} />
        <ChevronDown size={22} />
      </OutlineButton>
    </HeaderTools>
  </SiteHeader>
);

const Menu = () => (
  <Sidebar>
    <MenuLink href="#doctor" $active>
      <House size={30} strokeWidth={2} />
      Doctor
    </MenuLink>
    <MenuLink href="#mensagens" $tall $spread>
      <MenuLabel>
        <MessageIcon size={30} />
        Menssagens
      </MenuLabel>
      <Badge>16</Badge>
    </MenuLink>
    <MenuLink href="#notificacoes" $tall>
      <BellIcon size={30} />
      Notificações
      <Badge $gap={10}>16</Badge>
    </MenuLink>
    <MenuLink href="#pacientes">
      <UserCheckIcon size={30} />
      Pacientes
    </MenuLink>
    <MenuLink href="#estatisticas">
      <TrendingDown size={30} strokeWidth={2} />
      Estatisticas
    </MenuLink>
  </Sidebar>
);

const Statistics = () => (
  <Stats>
    <StatCard $wide>
      <dl>
        <Count>
          <dt>Diabetico</dt>
          <dd>702</dd>
        </Count>
        <Count>
          <dt>Hipertenso</dt>
          <dd>309</dd>
        </Count>
      </dl>
    </StatCard>
    <StatCard>
      <StatTitle>Total de Pacientes</StatTitle>
      <StatFigure>
        <UsersIcon size={36} />
        <FigureBox>1245 Pessoas</FigureBox>
      </StatFigure>
    </StatCard>
    <StatCard>
      <StatTitle>Pacientes em risco</StatTitle>
      <StatFigure>
        <UsersIcon size={36} />
        <FigureBox $tone={color.red}>1245 Pessoas</FigureBox>
      </StatFigure>
    </StatCard>
  </Stats>
);

const RecordList = () => (
  <RecordsPanel>
    <Filters>
      <Legend>
        {legend.map((l) => (
          <LegendItem key={l.label} $tone={l.tone} $gap={l.gap}>
            <Bar $width={72} $tone={l.tone} />
            <Dot $tone={l.tone} />
            {l.label}
          </LegendItem>
        ))}
      </Legend>
      <Field $width={168} type="text" aria-label="Filtro" />
      <PrimaryButton type="button">Filtrar</PrimaryButton>
    </Filters>
    <Records>
      <colgroup>
        {columns.map((c) => (
          <col key={c.label} width={c.width} />
        ))}
      </colgroup>
      <thead>
        <tr>
          {columns.map((c) => (
            <th key={c.label} scope="col">
              {c.label}
            </th>
          ))}
        </tr>
      </thead>
      <tbody>
        {records.map((r) => (
          <tr key={r.nip}>
            <td>{r.date}</td>
            <td>
              <HealthState>
                <Bar $width={120} $tone={r.tone} />
                <Dot $tone={r.tone} />
              </HealthState>
            </td>
            <td>{r.name}</td>
            <td>{r.nip}</td>
            <td>{r.kind}</td>
            <td>
              <Actions>
                <button aria-label="Ver">
                  <Eye size={25} />
                </button>
                <button aria-label="Actualizar">
                  <RotateCw size={25} />
                </button>
              </Actions>
            </td>
          </tr>
        ))}
      </tbody>
    </Records>
  </RecordsPanel>
);

const Charts = () => (
  <ChartPanel>
    <ChartTitle>Gráficos Analíticos</ChartTitle>
    <ChartCard>
      <ChartName>Estado dos pacientes</ChartName>
      <PieHolder>
        <PieChart />
      </PieHolder>
      <Shares>
        {shares.map((s) => (
          <Share key={s.label} $tone={s.tone}>
            <span>{s.label}</span>
            <span>{s.value}</span>
          </Share>
        ))}
      </Shares>
    </ChartCard>
  </ChartPanel>
);

const SystemBar = () => (
  <Taskbar>
    <StartButton aria-label="Iniciar">
      <WindowsLogo />
    </StartButton>
    <SystemSearch>
      <LoupeIcon />
      <input placeholder="Procurar" aria-label="Procurar" />
      <SparklesArt />
    </SystemSearch>
    <TaskViewButton aria-label="Vista de tarefas">
      <TaskViewIcon />
    </TaskViewButton>
    <Apps>
      {apps.map((a) => (
        <AppButton key={a.name} aria-label={a.name} $open={a.open} $active={a.active} $stack={a.stack}>
          {a.icon}
          {a.unread && <UnreadPill>{a.unread}</UnreadPill>}
        </AppButton>
      ))}
    </Apps>
    <Tray>
      <Weather>
        <WeatherIcon />
        25°C
      </Weather>
      <TrayIcon aria-label="Mostrar ícones ocultos">
        <ChevronUp size={32} strokeWidth={1.3} />
      </TrayIcon>
      <TrayIcon aria-label="Reunir agora">
        <MeetIcon />
      </TrayIcon>
      <TrayIcon aria-label="Bateria">
        <BatteryIcon />
      </TrayIcon>
      <TrayIcon aria-label="Volume">
        <SpeakerIcon />
      </TrayIcon>
      <TrayIcon aria-label="Rede">
        <WifiIcon />
      </TrayIcon>
      <Language>ENG</Language>
      <Clock>
        10:43 PM
        <br />
        12/24/2024
      </Clock>
      <NoticeButton aria-label="Notificações">
        <NoticeIcon />
        <NoticeCount>23</NoticeCount>
      </NoticeButton>
    </Tray>
  </Taskbar>
);

export default function App() {
  return (
    <Desktop>
      <GlobalStyle />
      <Browser />
      <Viewport>
        <Page>
          <Header />
          <Body>
            <Menu />
            <Main>
              <TitleRow>
                <div>
                  <Title>Painel do Tecnico de Saúde</Title>
                  <Subtitle>Gestão e controle de todos os pacientes na plataforma</Subtitle>
                </div>
                <PrimaryButton>
                  <Plus size={25} strokeWidth={1.5} />
                  <UserCheckIcon size={25} stroke={1.5} />
                  Adicionar Membro
                </PrimaryButton>
              </TitleRow>
              <Board>
                <Statistics />
                <Lower>
                  <RecordList />
                  <Charts />
                </Lower>
              </Board>
            </Main>
          </Body>
        </Page>
        <Scrollbar>
          <ScrollArrow />
          <ScrollThumb />
          <ScrollArrow $down />
        </Scrollbar>
      </Viewport>
      <SystemBar />
    </Desktop>
  );
}
